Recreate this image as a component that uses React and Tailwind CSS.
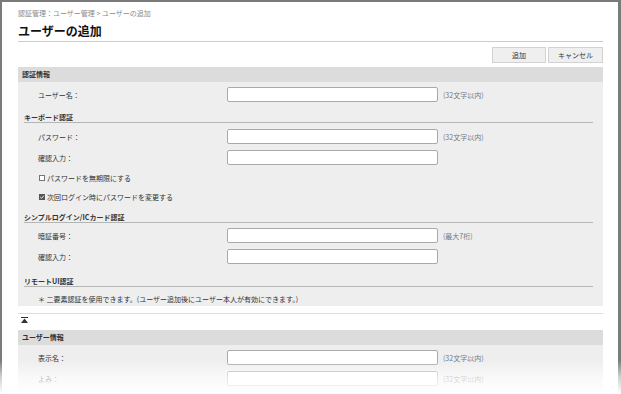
import React from 'react';

const font = { fontFamily: '"Noto Sans CJK JP", "Noto Sans", sans-serif' };

const FieldRow = ({ label, note, className = '' }) => (
  <div className={`flex items-center h-[15px] ${className}`}>
    <div className="w-[209px] pl-[20px] text-[7px] leading-[10px] text-[#333]">{label}</div>
    <div className="w-[211px] h-[15px] bg-white border border-[#aaaaaa] rounded-[2px]" />
    {note && <div className="ml-[5px] text-[7px] leading-[10px] text-[#6f7b8c]">{note}</div>}
  </div>
);

const SubHeader = ({ children, className = '' }) => (
  <div className={`ml-[6px] mr-[10px] h-[11px] border-b border-[#b5b5b5] text-[7px] leading-[10px] font-bold text-[#333] ${className}`}>
    {children}
  </div>
);

const SectionBar = ({ children, className = '' }) => (
  <div className={`h-[15px] bg-[#dcdcdc] pl-[4px] flex items-center text-[7px] font-bold text-[#333] ${className}`}>
    {children}
  </div>
);

const Check = ({ checked, label, className = '' }) => (
  <div className={`flex items-center h-[12px] pl-[21px] ${className}`}>
    {checked ? (
      <svg width="6" height="6" viewBox="0 0 6 6" className="mr-[2px]">
        <rect x="0" y="0" width="6" height="6" fill="#555" />
        <path d="M1.2 3 L2.5 4.3 L4.9 1.6" stroke="#fff" strokeWidth="0.9" fill="none" />
      </svg>
    ) : (
      <div className="w-[6px] h-[6px] bg-white border border-[#777] mr-[2px]" />
    )}
    <span className="text-[7px] leading-[10px] text-[#333]">{label}</span>
  </div>
);

export default function App() {
  return (
    <div className="relative w-[621px] h-[394px] overflow-hidden bg-white" style={font}>
      <div className="h-full border-t-2 border-l-2 border-r-[3px] border-[#7a7a7a] pl-[16px] pr-[15px] pt-[6px]">
        <div className="h-[10px] text-[7px] leading-[10px] text-[#8a8a8a]">
          認証管理：ユーザー管理 &gt; ユーザーの追加
        </div>
        <div className="mt-[5px] h-[16px] text-[12px] leading-[16px] font-bold text-[#111]">ユーザーの追加</div>
        <div className="mt-[2px] border-b border-[#cccccc]" />

        <div className="mt-[5px] flex justify-end gap-[2px]">
          <button className="w-[54px] h-[16px] bg-[#efefef] border border-[#d2d2d2] text-[7px] text-[#333]">追加</button>
          <button className="w-[55px] h-[16px] bg-[#efefef] border border-[#d2d2d2] text-[7px] text-[#333]">キャンセル</button>
        </div>

        <SectionBar className="mt-[4px]">認証情報</SectionBar>
        <div className="bg-[#eeeeee] pt-[5px] pb-[2px]">
          <FieldRow label="ユーザー名：" note="(32文字以内)" />
          <SubHeader className="mt-[10px]">キーボード認証</SubHeader>
          <FieldRow label="パスワード：" note="(32文字以内)" className="mt-[6px]" />
          <FieldRow label="確認入力：" className="mt-[6px]" />
          <Check label="パスワードを無期限にする" className="mt-[7px]" />
          <Check checked label="次回ログイン時にパスワードを変更する" className="mt-[7px]" />
          <SubHeader className="mt-[9px]">シンプルログイン/ICカード認証</SubHeader>
          <FieldRow label="暗証番号：" note="(最大7桁)" className="mt-[5px]" />
          <FieldRow label="確認入力：" className="mt-[6px]" />
          <SubHeader className="mt-[12px]">リモートUI認証</SubHeader>
          <div className="mt-[7px] h-[10px] pl-[20px] text-[7px] leading-[10px] text-[#333]">
            ＊ 二要素認証を使用できます。(ユーザー追加後にユーザー本人が有効にできます。)
          </div>
        </div>

        <div className="mt-[7px] border-b border-[#dddddd]" />
        <div className="h-[16px] pl-[3px] pt-[3px]">
          <svg width="7" height="6" viewBox="0 0 7 6">
            <rect x="0" y="0" width="7" height="1" fill="#333" />
            <path d="M3.5 1.6 L7 6 L0 6 Z" fill="#333" />
          </svg>
        </div>

        <SectionBar>ユーザー情報</SectionBar>
        <div className="bg-[#eeeeee] pt-[5px] pb-[6px]">
          <FieldRow label="表示名：" note="(32文字以内)" />
          <FieldRow label="よみ：" note="(32文字以内)" className="mt-[6px]" />
        </div>
      </div>
      <div className="absolute left-0 right-0 bottom-0 h-[34px] bg-gradient-to-b from-transparent via-white/65 to-white" />
    </div>
  );
}
